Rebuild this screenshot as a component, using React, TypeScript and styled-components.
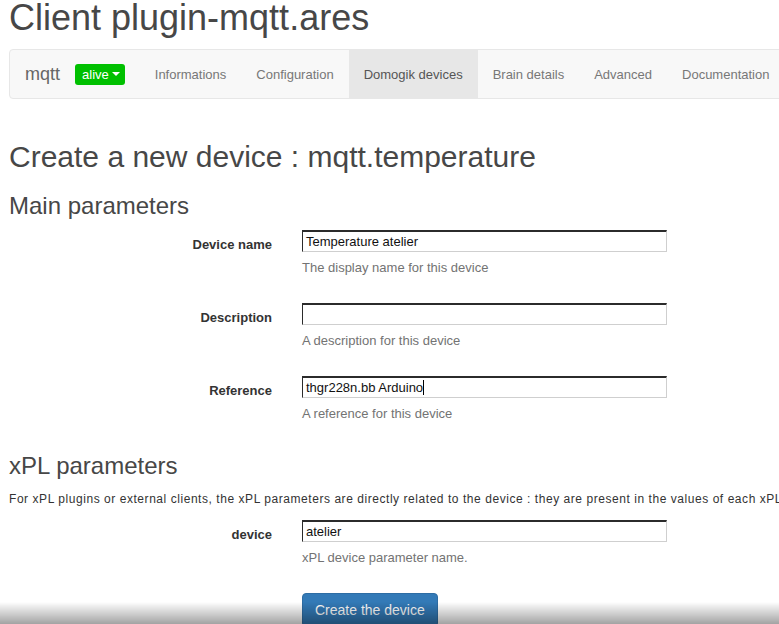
import React from "react";
import styled, { createGlobalStyle } from "styled-components";

const Global = createGlobalStyle`
  html, body { margin: 0; padding: 0; background: #fff; overflow: hidden; }
  body { font-family: "Liberation Sans", Arial, Helvetica, sans-serif; color: #333; font-size: 13px; }
  * { box-sizing: border-box; }
`;

const Page = styled.div`
  width: 830px;
  padding: 0 0 0 9px;
`;

const Title = styled.h1`
  margin: 0;
  font-size: 36px;
  line-height: 36px;
  font-weight: 400;
  color: #474747;
`;

const Navbar = styled.nav`
  margin-top: 13px;
  height: 50px;
  display: flex;
  align-items: stretch;
  background: #f8f8f8;
  border: 1px solid #e7e7e7;
  border-radius: 4px;
`;

const Brand = styled.span`
  display: flex;
  align-items: center;
  padding: 0 15px;
  font-size: 18px;
  color: #666;
`;

const StatusLabel = styled.span`
  align-self: center;
  display: flex;
  align-items: center;
  height: 21px;
  padding: 0 5px 0 7px;
  margin-right: 15px;
  background: #00c000;
  color: #fff;
  font-size: 13px;
  border-radius: 3px;
`;

const Caret = styled.span`
  display: inline-block;
  margin-left: 3px;
  width: 0;
  height: 0;
  border-top: 4px solid #fff;
  border-left: 4px solid transparent;
  border-right: 4px solid transparent;
`;

const NavItem = styled.a<{ $active?: boolean }>`
  display: flex;
  align-items: center;
  padding: 0 15px;
  font-size: 13px;
  color: ${(p) => (p.$active ? "#555" : "#777")};
  background: ${(p) => (p.$active ? "#e7e7e7" : "transparent")};
  text-decoration: none;
  white-space: nowrap;
`;

const PageHeading = styled.h2`
  margin: 41px 0 0;
  font-size: 30px;
  line-height: 33px;
  font-weight: 400;
  color: #474747;
`;

const SectionHeading = styled.h3<{ $top: number }>`
  margin: ${(p) => p.$top}px 0 0;
  font-size: 24px;
  line-height: 26px;
  font-weight: 400;
  color: #474747;
`;

const Rows = styled.div<{ $top: number }>`
  margin-top: ${(p) => p.$top}px;
  display: flex;
  flex-direction: column;
  gap: 26px;
`;

const Row = styled.div`
  display: grid;
  grid-template-columns: 263px 365px;
  column-gap: 30px;
`;

const Label = styled.label`
  text-align: right;
  font-weight: 700;
  font-size: 13px;
  line-height: 18px;
  padding-top: 6px;
  color: #333;
`;

const Field = styled.div`
  display: flex;
  flex-direction: column;
`;

const Input = styled.div`
  height: 22px;
  border-style: solid;
  border-width: 2px 1px 1px 1px;
  border-color: #2b2b2b #cfcfcf #cfcfcf #2b2b2b;
  padding: 0 3px;
  font-size: 13px;
  line-height: 19px;
  color: #111;
  background: #fff;
  white-space: nowrap;
`;

const Cursor = styled.span`
  display: inline-block;
  width: 1px;
  height: 15px;
  background: #000;
  vertical-align: -3px;
`;

const Help = styled.span`
  margin-top: 7px;
  font-size: 13px;
  line-height: 18px;
  color: #737373;
`;

const Intro = styled.p`
  margin: 12px 0 0;
  font-size: 12px;
  line-height: 17px;
  letter-spacing: 0.55px;
  color: #333;
  white-space: nowrap;
`;

const Actions = styled.div`
  margin-top: 26px;
  padding-left: 293px;
`;

const Button = styled.button`
  height: 34px;
  padding: 0 12px;
  font-family: inherit;
  font-size: 14px;
  color: #fff;
  background: #337ab7;
  border: 1px solid #2e6da4;
  border-radius: 4px;
`;

const Fade = styled.div`
  position: fixed;
  left: 0;
  right: 0;
  bottom: 0;
  height: 22px;
  pointer-events: none;
  background: linear-gradient(to bottom, rgba(0, 0, 0, 0), rgba(0, 0, 0, 0.36));
`;

const navItems = ["Informations", "Configuration", "Domogik devices", "Brain details", "Advanced", "Documentation"];

const mainFields = [
  { label: "Device name", value: "Temperature atelier", help: "The display name for this device" },
  { label: "Description", value: "", help: "A description for this device" },
  { label: "Reference", value: "thgr228n.bb Arduino", help: "A reference for this device", cursor: true },
];

export default function App() {
  return (
    <>
      <Global />
      <Page>
        <Title>Client plugin-mqtt.ares</Title>
        <Navbar>
          <Brand>mqtt</Brand>
          <StatusLabel>
            alive
            <Caret />
          </StatusLabel>
          {navItems.map((n) => (
            <NavItem key={n} $active={n === "Domogik devices"}>
              {n}
            </NavItem>
          ))}
        </Navbar>
        <PageHeading>Create a new device : mqtt.temperature</PageHeading>
        <SectionHeading $top={20}>Main parameters</SectionHeading>
        <Rows $top={11}>
          {mainFields.map((f) => (
            <Row key={f.label}>
              <Label>{f.label}</Label>
              <Field>
                <Input>
                  {f.value}
                  {f.cursor && <Cursor />}
                </Input>
                <Help>{f.help}</Help>
              </Field>
            </Row>
          ))}
        </Rows>
        <SectionHeading $top={30}>xPL parameters</SectionHeading>
        <Intro>
          For xPL plugins or external clients, the xPL parameters are directly related to the device : they are present in the values of each xPL message
        </Intro>
        <Rows $top={12}>
          <Row>
            <Label>device</Label>
            <Field>
              <Input>atelier</Input>
              <Help>xPL device parameter name.</Help>
            </Field>
          </Row>
        </Rows>
        <Actions>
          <Button>Create the device</Button>
        </Actions>
      </Page>
      <Fade />
    </>
  );
}
